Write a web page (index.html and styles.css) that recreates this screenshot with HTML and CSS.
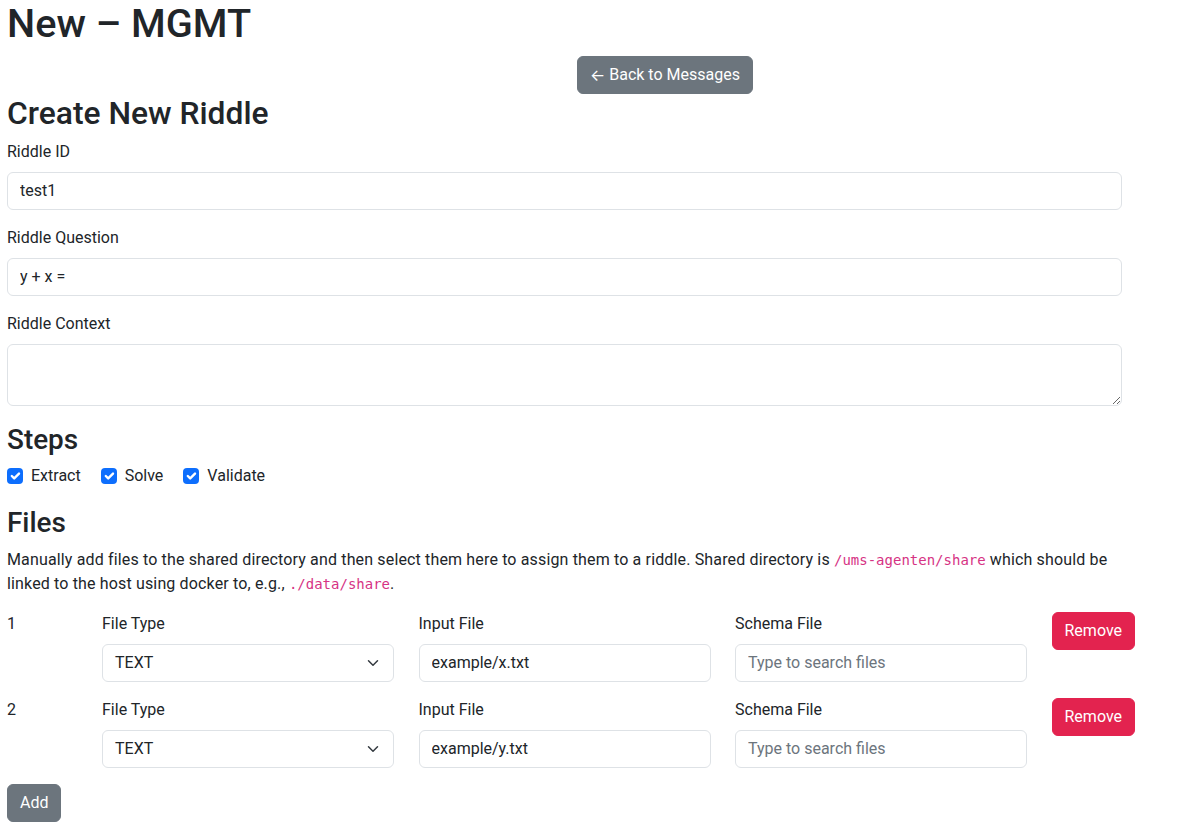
FILE: index.html
```html
<!DOCTYPE html>
<html lang="en">
<head>
<meta charset="utf-8">
<title>New – MGMT</title>
<link rel="stylesheet" href="styles.css">
</head>
<body>
<main class="page">
  <h1 class="title">New – MGMT</h1>
  <div class="back-row"><button class="btn btn-secondary back-btn"><span class="arrow">←</span> Back to Messages</button></div>
  <h2 class="h2">Create New Riddle</h2>
  <div class="field">
    <label class="label">Riddle ID</label>
    <input class="control" type="text" value="test1">
  </div>
  <div class="field">
    <label class="label">Riddle Question</label>
    <input class="control" type="text" value="y + x =">
  </div>
  <div class="field">
    <label class="label">Riddle Context</label>
    <textarea class="control textarea" rows="2"></textarea>
  </div>
  <h3 class="h3 steps-h">Steps</h3>
  <div class="checks">
    <label class="check"><span class="box"><svg viewBox="0 0 20 20" width="16" height="16"><path d="M6 10l3 3l6-6" fill="none" stroke="#fff" stroke-width="3" stroke-linecap="round" stroke-linejoin="round"/></svg></span>Extract</label>
    <label class="check"><span class="box"><svg viewBox="0 0 20 20" width="16" height="16"><path d="M6 10l3 3l6-6" fill="none" stroke="#fff" stroke-width="3" stroke-linecap="round" stroke-linejoin="round"/></svg></span>Solve</label>
    <label class="check"><span class="box"><svg viewBox="0 0 20 20" width="16" height="16"><path d="M6 10l3 3l6-6" fill="none" stroke="#fff" stroke-width="3" stroke-linecap="round" stroke-linejoin="round"/></svg></span>Validate</label>
  </div>
  <h3 class="h3 files-h">Files</h3>
  <p class="para">Manually add files to the shared directory and then select them here to assign them to a riddle. Shared directory is <code>/ums-agenten/share</code> which should be linked to the host using docker to, e.g., <code>./data/share</code>.</p>

  <div class="file-row">
    <div class="num">1</div>
    <div class="col">
      <label class="label">File Type</label>
      <div class="select"><span>TEXT</span><svg width="16" height="12" viewBox="0 0 16 16"><path d="M2 5l6 6 6-6" fill="none" stroke="#343a40" stroke-width="2" stroke-linecap="round" stroke-linejoin="round"/></svg></div>
    </div>
    <div class="col">
      <label class="label">Input File</label>
      <input class="control" type="text" value="example/x.txt">
    </div>
    <div class="col">
      <label class="label">Schema File</label>
      <input class="control" type="text" placeholder="Type to search files">
    </div>
    <div><button class="btn btn-danger">Remove</button></div>
  </div>

  <div class="file-row">
    <div class="num">2</div>
    <div class="col">
      <label class="label">File Type</label>
      <div class="select"><span>TEXT</span><svg width="16" height="12" viewBox="0 0 16 16"><path d="M2 5l6 6 6-6" fill="none" stroke="#343a40" stroke-width="2" stroke-linecap="round" stroke-linejoin="round"/></svg></div>
    </div>
    <div class="col">
      <label class="label">Input File</label>
      <input class="control" type="text" value="example/y.txt">
    </div>
    <div class="col">
      <label class="label">Schema File</label>
      <input class="control" type="text" placeholder="Type to search files">
    </div>
    <div><button class="btn btn-danger">Remove</button></div>
  </div>

  <button class="btn btn-secondary">Add</button>
</main>
</body>
</html>
```

FILE: styles.css
```css
* { box-sizing: border-box; }
html, body { margin: 0; padding: 0; background: #fff; }
body {
  font-family: Roboto, "Noto Sans", "Liberation Sans", sans-serif;
  font-size: 16px;
  line-height: 1.5;
  color: #212529;
}
.page { padding: 0 7px; width: 1144px; }
.title { font-size: 39.7px; font-weight: 500; line-height: 1.2; margin: 0 0 8px; }
.h2 { font-size: 31.8px; font-weight: 500; line-height: 1.2; margin: 0 0 8px; }
.h3 { font-size: 27.9px; font-weight: 500; line-height: 1.2; margin: 0 0 8px; }
.steps-h { padding-top: 1px; }
.back-row { padding-left: 570px; }
.btn {
  display: inline-block;
  font: inherit;
  font-size: 16px;
  line-height: 24px;
  height: 38px;
  padding: 6px 12px;
  border: 1px solid transparent;
  border-radius: 6px;
  color: #fff;
  cursor: pointer;
  vertical-align: top;
}
.arrow {
  font-family: Inter, "DejaVu Sans", sans-serif;
  display: inline-block;
  line-height: 24px;
  height: 24px;
  vertical-align: top;
}
.btn-secondary { background: #6c757d; border-color: #6c757d; }
.btn-danger { background: #e3234f; border-color: #e3234f; }
.field { margin-bottom: 16px; width: 1115px; }
.label { display: block; margin-bottom: 8px; line-height: 24px; }
.control {
  display: block;
  width: 100%;
  font: inherit;
  font-size: 16px;
  line-height: 24px;
  padding: 6px 12px;
  color: #212529;
  background: #fff;
  border: 1px solid #dee2e6;
  border-radius: 6px;
  outline: none;
}
.control::placeholder { color: #6c757d; opacity: 1; }
.textarea { height: 62px; resize: vertical; }
.checks { display: flex; gap: 20px; margin-bottom: 18px; }
.check { display: flex; align-items: center; gap: 8px; line-height: 24px; }
.box {
  width: 16px; height: 16px;
  border-radius: 4px;
  background: #0d6efd;
  display: flex; align-items: center; justify-content: center;
}
.box svg { display: block; }
.para { margin: 0 0 16px; max-width: 1115px; letter-spacing: 0.15px; }
code {
  font-family: "DejaVu Sans Mono", "Liberation Mono", monospace;
  font-size: 14px;
  letter-spacing: 0;
  color: #d63384;
}
.file-row {
  display: grid;
  grid-template-columns: 70.5px 292px 292px 292px auto;
  column-gap: 24.5px;
  margin-bottom: 16px;
  align-items: start;
}
.num { line-height: 24px; }
.select {
  display: flex;
  align-items: center;
  justify-content: space-between;
  height: 38px;
  padding: 6px 12px 6px 12px;
  border: 1px solid #dee2e6;
  border-radius: 6px;
  line-height: 24px;
}
.select svg { display: block; }
```
